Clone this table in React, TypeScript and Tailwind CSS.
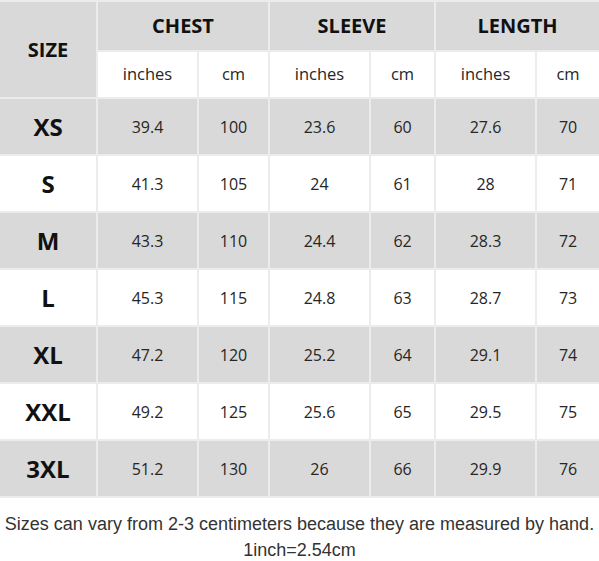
import React from "react"

const rows = [
    { size: "XS", v: ["39.4", "100", "23.6", "60", "27.6", "70"] },
    { size: "S", v: ["41.3", "105", "24", "61", "28", "71"] },
    { size: "M", v: ["43.3", "110", "24.4", "62", "28.3", "72"] },
    { size: "L", v: ["45.3", "115", "24.8", "63", "28.7", "73"] },
    { size: "XL", v: ["47.2", "120", "25.2", "64", "29.1", "74"] },
    { size: "XXL", v: ["49.2", "125", "25.6", "65", "29.5", "75"] },
    { size: "3XL", v: ["51.2", "130", "26", "66", "29.9", "76"] },
]

const cell = "border-2 border-[#ececec] text-center p-0"

export default function App() {
    return (
        <div className="w-[599px] bg-white">
            <table
                className="w-[599px] table-fixed border-collapse text-[#262626]"
                style={{ fontFamily: '"Open Sans", sans-serif' }}
            >
                <colgroup>
                    <col className="w-[97px]" />
                    <col className="w-[101px]" />
                    <col className="w-[71px]" />
                    <col className="w-[101px]" />
                    <col className="w-[65px]" />
                    <col className="w-[101px]" />
                    <col className="w-[63px]" />
                </colgroup>
                <thead>
                    <tr className="h-[50px] bg-[#d9d9d9]">
                        <th rowSpan={2} className={`${cell} border-l-0 text-[20px] font-bold text-[#111]`}>
                            SIZE
                        </th>
                        <th colSpan={2} className={`${cell} text-[20px] font-bold text-[#111]`}>
                            CHEST
                        </th>
                        <th colSpan={2} className={`${cell} text-[20px] font-bold text-[#111]`}>
                            SLEEVE
                        </th>
                        <th colSpan={2} className={`${cell} border-r-0 text-[20px] font-bold text-[#111]`}>
                            LENGTH
                        </th>
                    </tr>
                    <tr className="h-[47px] bg-white">
                        {["inches", "cm", "inches", "cm", "inches", "cm"].map((t, i) => (
                            <td key={i} className={`${cell} text-[16.5px] ${i === 5 ? "border-r-0" : ""}`}>
                                {t}
                            </td>
                        ))}
                    </tr>
                </thead>
                <tbody>
                    {rows.map((r, i) => (
                        <tr key={r.size} className={`h-[57px] ${i % 2 === 0 ? "bg-[#d9d9d9]" : "bg-white"}`}>
                            <td className={`${cell} border-l-0 text-[24px] font-bold text-[#111]`}>{r.size}</td>
                            {r.v.map((x, j) => (
                                <td key={j} className={`${cell} text-[16px] ${j === 5 ? "border-r-0" : ""}`}>
                                    {x}
                                </td>
                            ))}
                        </tr>
                    ))}
                </tbody>
            </table>
            <p
                className="mt-[13px] whitespace-nowrap text-center text-[18px] leading-[26px] text-[#333]"
                style={{ fontFamily: '"Liberation Sans", Arial, sans-serif' }}
            >
                Sizes can vary from 2-3 centimeters because they are measured by hand.
                <br />
                1inch=2.54cm
            </p>
        </div>
    )
}
